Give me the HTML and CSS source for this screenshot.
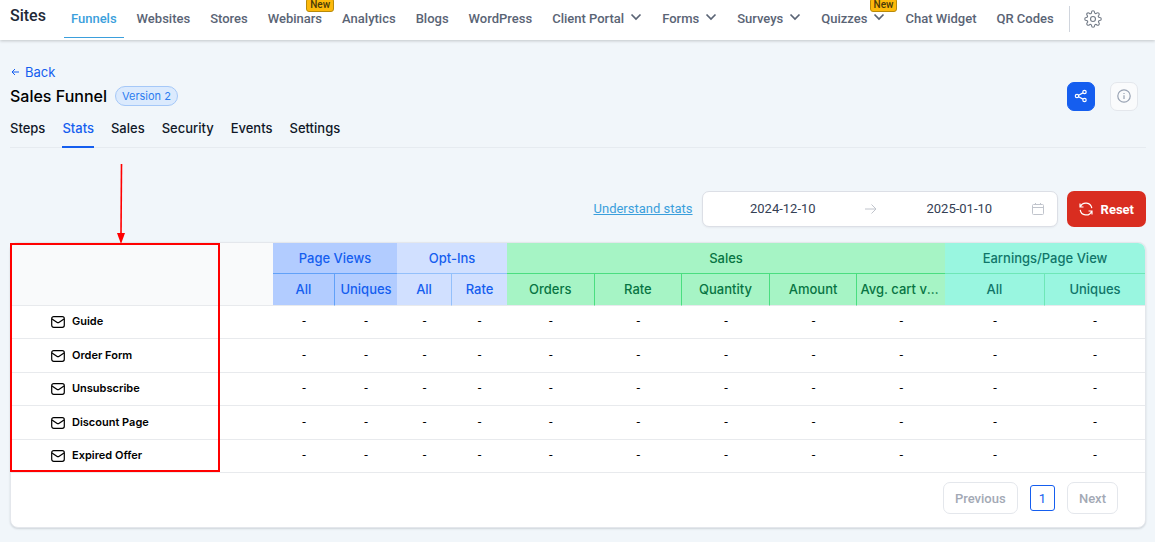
FILE: index.html
```html
<!DOCTYPE html>
<html lang="en">
<head>
    <meta charset="UTF-8">
    <meta name="viewport" content="width=device-width, initial-scale=1.0">
    <title>Sales Funnel - Stats</title>
    <link rel="stylesheet" href="styles.css">
</head>
<body>

    <svg class="sprite" aria-hidden="true">
        <symbol id="chevron" viewBox="0 0 12 8"><path d="M1.5 1.5 6 6l4.500-4.500" fill="none" stroke="currentColor" stroke-width="1.700"/></symbol>
        <symbol id="mail" viewBox="0 0 14 12"><rect x=".7" y=".7" width="12.600" height="10.600" rx="2" fill="none" stroke="currentColor" stroke-width="1.200"/><path d="M1 3l4.800 3.300q1.200.8 2.400 0L13 3" fill="none" stroke="currentColor" stroke-width="1.200"/></symbol>
    </svg>

    <header class="topbar">
        <div class="brand">Sites</div>
        <nav class="topnav">
            <a href="#" class="active">Funnels</a>
            <a href="#">Websites</a>
            <a href="#">Stores</a>
            <a href="#">Webinars<span class="new">New</span></a>
            <a href="#">Analytics</a>
            <a href="#">Blogs</a>
            <a href="#">WordPress</a>
            <a href="#">Client Portal<svg class="chevron"><use href="#chevron"/></svg></a>
            <a href="#">Forms<svg class="chevron"><use href="#chevron"/></svg></a>
            <a href="#">Surveys<svg class="chevron"><use href="#chevron"/></svg></a>
            <a href="#">Quizzes<svg class="chevron"><use href="#chevron"/></svg><span class="new">New</span></a>
            <a href="#">Chat Widget</a>
            <a href="#">QR Codes</a>
        </nav>
        <button class="gear" aria-label="Settings">
            <svg width="18" height="18" viewBox="0 0 24 24" fill="none" stroke="currentColor" stroke-width="1.500" stroke-linejoin="round">
                <circle cx="12" cy="12" r="3.300"/>
                <path d="M19.400 15a1.650 1.650 0 0 0 .33 1.820l.06.06a2 2 0 1 1-2.830 2.830l-.06-.06a1.650 1.650 0 0 0-2.800 1.170V21a2 2 0 0 1-4 0v-.09A1.650 1.650 0 0 0 7.200 19.730l-.06.06a2 2 0 1 1-2.830-2.830l.06-.06A1.650 1.650 0 0 0 3.090 14H3a2 2 0 0 1 0-4h.09A1.650 1.650 0 0 0 4.270 7.200l-.06-.06a2 2 0 1 1 2.830-2.830l.06.06A1.650 1.650 0 0 0 10 3.090V3a2 2 0 0 1 4 0v.09a1.650 1.650 0 0 0 2.800 1.180l.06-.06a2 2 0 1 1 2.830 2.830l-.06.06A1.650 1.650 0 0 0 20.910 10H21a2 2 0 0 1 0 4h-.09a1.650 1.650 0 0 0-1.510 1z"/>
            </svg>
        </button>
    </header>

    <main class="page">
        <a href="#" class="back">
            <svg width="9" height="8" viewBox="0 0 9 8" fill="none" stroke="currentColor"><path d="M8 4H1M4 1 1 4l3 3"/></svg>
            Back
        </a>
        <div class="title-row">
            <h1>Sales Funnel</h1>
            <span class="version">Version 2</span>
            <div class="title-actions">
                <button class="icon-btn share" aria-label="Share">
                    <svg width="14" height="14" viewBox="0 0 14 14" fill="none" stroke="currentColor" stroke-width="1.200"><circle cx="3" cy="7" r="1.700"/><circle cx="10.500" cy="3" r="1.700"/><circle cx="10.500" cy="11" r="1.700"/><path d="M4.700 6.200 8.900 3.900M4.700 7.800l4.200 2.300"/></svg>
                </button>
                <button class="icon-btn" aria-label="Info">
                    <svg width="14" height="14" viewBox="0 0 14 14" fill="none" stroke="currentColor" stroke-width="1.200"><circle cx="7" cy="7" r="6.200"/><path d="M7 6.200V10M7 4v1"/></svg>
                </button>
            </div>
        </div>

        <nav class="tabs">
            <a href="#">Steps</a>
            <a href="#" class="active">Stats</a>
            <a href="#">Sales</a>
            <a href="#">Security</a>
            <a href="#">Events</a>
            <a href="#">Settings</a>
        </nav>

        <div class="filters">
            <a href="#" class="help">Understand stats</a>
            <div class="range">
                <input type="text" value="2024-12-10" aria-label="Start date">
                <svg class="to" width="12" height="10" viewBox="0 0 12 10" fill="none" stroke="currentColor"><path d="M0 5h11M6.500.5 11 5 6.500 9.500"/></svg>
                <input type="text" value="2025-01-10" aria-label="End date">
                <svg width="12" height="12" viewBox="0 0 12 12" fill="none" stroke="currentColor"><rect x=".5" y="1.500" width="11" height="10" rx="1"/><path d="M.5 4.500h11M3.500 0v2M8.500 0v2"/></svg>
            </div>
            <button class="reset">
                <svg width="14" height="14" viewBox="0 0 14 14" fill="none" stroke="currentColor" stroke-width="1.200"><path d="M1 1.500V5h3.500M1.300 4.800A6 6 0 0 1 12.800 6.200M13 12.500V9H9.500M12.700 9.200A6 6 0 0 1 1.200 7.800"/></svg>
                Reset
            </button>
        </div>

        <section class="card">
            <table class="stats">
                <colgroup>
                    <col class="c-name">
                    <col class="c-views"><col class="c-views">
                    <col class="c-opt"><col class="c-opt">
                    <col><col><col><col><col>
                    <col class="c-earn"><col class="c-earn">
                </colgroup>
                <thead>
                    <tr>
                        <td rowspan="2" class="blank"></td>
                        <th colspan="2" class="views">Page Views</th>
                        <th colspan="2" class="opt">Opt-Ins</th>
                        <th colspan="5" class="sales">Sales</th>
                        <th colspan="2" class="earn">Earnings/Page View</th>
                    </tr>
                    <tr class="sub">
                        <th class="views split">All</th>
                        <th class="views">Uniques</th>
                        <th class="opt split">All</th>
                        <th class="opt">Rate</th>
                        <th class="sales split">Orders</th>
                        <th class="sales split">Rate</th>
                        <th class="sales split">Quantity</th>
                        <th class="sales split">Amount</th>
                        <th class="sales">Avg. cart value</th>
                        <th class="earn split">All</th>
                        <th class="earn">Uniques</th>
                    </tr>
                </thead>
                <tbody>
                    <tr><th scope="row"><svg class="mail"><use href="#mail"/></svg>Guide</th><td>-</td><td>-</td><td>-</td><td>-</td><td>-</td><td>-</td><td>-</td><td>-</td><td>-</td><td>-</td><td>-</td></tr>
                    <tr><th scope="row"><svg class="mail"><use href="#mail"/></svg>Order Form</th><td>-</td><td>-</td><td>-</td><td>-</td><td>-</td><td>-</td><td>-</td><td>-</td><td>-</td><td>-</td><td>-</td></tr>
                    <tr><th scope="row"><svg class="mail"><use href="#mail"/></svg>Unsubscribe</th><td>-</td><td>-</td><td>-</td><td>-</td><td>-</td><td>-</td><td>-</td><td>-</td><td>-</td><td>-</td><td>-</td></tr>
                    <tr><th scope="row"><svg class="mail"><use href="#mail"/></svg>Discount Page</th><td>-</td><td>-</td><td>-</td><td>-</td><td>-</td><td>-</td><td>-</td><td>-</td><td>-</td><td>-</td><td>-</td></tr>
                    <tr><th scope="row"><svg class="mail"><use href="#mail"/></svg>Expired Offer</th><td>-</td><td>-</td><td>-</td><td>-</td><td>-</td><td>-</td><td>-</td><td>-</td><td>-</td><td>-</td><td>-</td></tr>
                </tbody>
            </table>
            <div class="pager">
                <button disabled>Previous</button>
                <button class="current">1</button>
                <button disabled>Next</button>
            </div>

            <!-- callout around the step names -->
            <div class="callout"></div>
            <svg class="callout-arrow" width="8" height="80" viewBox="0 0 8 80"><path d="M4.500 0 4 70" stroke="#f00" stroke-width="1.600"/><path d="M0 69h8L4 80z" fill="#f00"/></svg>
        </section>
    </main>

</body>
</html>
```
FILE: styles.css
```css
* {
    box-sizing: border-box;
}

body {
    margin: 0;
    background: #f1f6fa;
    color: #101828;
    font-family: Inter, "Liberation Sans", sans-serif;
    font-size: 13px;
    line-height: 16px;
}

a {
    color: inherit;
    text-decoration: none;
}

button,
input {
    font-family: Roboto, "Liberation Sans", sans-serif;
    font-size: 13px;
}

.sprite {
    position: absolute;
    width: 0;
    height: 0;
}

/* top bar */
.topbar {
    display: flex;
    align-items: flex-start;
    height: 40px;
    padding-left: 10px;
    background: #fff;
    box-shadow: 0 1px 3px rgba(0, 0, 0, 0.2);
    font-family: Roboto, "Liberation Sans", sans-serif;
    font-weight: 500;
}

.brand {
    padding-top: 8px;
    margin-right: 18px;
    font-size: 16px;
    color: #1f2937;
}

.topnav {
    display: flex;
    gap: 6px;
    padding-right: 8px;
    white-space: nowrap;
}

.topnav a {
    position: relative;
    display: flex;
    height: 38px;
    padding: 11px 7px 0 7px;
    color: #5a6475;
}

.topnav .active {
    color: #3b9fdc;
    border-bottom: 1px solid #3b9fdc;
}

.chevron {
    width: 12px;
    height: 8px;
    margin: 2px 0 0 6px;
}

.new {
    position: absolute;
    top: -2px;
    right: -5px;
    padding: 0 3px;
    border: 1px solid #b88a0a;
    border-radius: 3px;
    background: #fdb90b;
    color: #4a3a08;
    font-size: 10px;
    line-height: 12px;
}

.gear {
    display: flex;
    align-items: center;
    height: 26px;
    margin-top: 6px;
    padding: 0 0 0 14px;
    border: 0;
    border-left: 1px solid #d0d5dd;
    background: none;
    color: #737b87;
}

/* page head */
.page {
    padding: 23px 9px 14px 10px;
}

.back {
    display: inline-flex;
    align-items: center;
    gap: 5px;
    padding-left: 1px;
    color: #155eef;
}

.title-row {
    display: flex;
    align-items: center;
    height: 32px;
}

h1 {
    margin: 0;
    font-size: 16px;
    font-weight: 500;
    color: #000;
}

.version {
    margin-left: 8px;
    padding: 0 6px;
    border: 1px solid #a5c8f8;
    border-radius: 10px;
    background: #dbeafd;
    color: #2b7cf0;
    font-size: 11px;
    line-height: 18px;
}

.title-actions {
    display: flex;
    gap: 15px;
    margin-left: auto;
    padding-right: 8px;
}

.icon-btn {
    display: flex;
    align-items: center;
    justify-content: center;
    width: 28px;
    height: 29px;
    padding: 0;
    border: 1px solid #e4e7ec;
    border-radius: 7px;
    background: #fafbfc;
    color: #98a2b3;
}

.share {
    border-color: #155eef;
    background: #155eef;
    color: #fff;
}

.tabs {
    display: flex;
    gap: 17px;
    height: 36px;
    border-bottom: 1px solid #e6ebf0;
    font-weight: 500;
}

.tabs a {
    height: 36px;
    padding-top: 8px;
}

.tabs .active {
    color: #155eef;
    border-bottom: 2px solid #155eef;
}

/* filters */
.filters {
    display: flex;
    align-items: center;
    justify-content: flex-end;
    margin: 43px 0 15px;
    font-family: Roboto, "Liberation Sans", sans-serif;
}

.help {
    color: #3b9fdc;
    text-decoration: underline;
}

.range {
    display: flex;
    align-items: center;
    width: 356px;
    height: 36px;
    margin: 0 9px;
    padding: 0 13px 0 8px;
    border: 1px solid #dcdfe6;
    border-radius: 7px;
    background: #fff;
    box-shadow: 0 1px 2px rgba(16, 24, 40, 0.05);
    color: #c0c4cc;
}

.range input {
    flex: 1;
    min-width: 0;
    padding: 0 0 1px;
    border: 0;
    background: none;
    color: #344054;
    text-align: center;
}

.to {
    margin: 0 10px;
}

.reset {
    display: flex;
    align-items: center;
    gap: 8px;
    height: 36px;
    padding: 0 12px;
    border: 0;
    border-radius: 7px;
    background: #d92d20;
    color: #fff;
    font-weight: 700;
}

/* stats table */
.card {
    position: relative;
    border: 1px solid #e4e7ec;
    border-radius: 8px;
    background: #fff;
    box-shadow: 0 1px 2px rgba(16, 24, 40, 0.15);
}

.stats {
    width: 100%;
    table-layout: fixed;
    border-collapse: separate;
    border-spacing: 0;
}

.c-name { width: 262px; }
.c-views { width: 62px; }
.c-opt { width: 55px; }
.c-earn { width: 100px; }

.stats th,
.stats td {
    padding: 0;
    text-align: center;
    border-bottom: 1px solid #e8eaed;
}

.stats thead th {
    height: 31px;
    padding: 0 3px;
    font-weight: 500;
    white-space: nowrap;
    overflow: hidden;
    text-overflow: ellipsis;
}

.stats .blank {
    background: #f9fafb;
    border-top-left-radius: 7px;
}

.stats .views { background: #b2ccff; color: #155eef; border-color: #61a1f8; }
.stats .opt { background: #d1e0ff; color: #155eef; border-color: #93c0fb; }
.stats .sales { background: #a6f4c5; color: #087443; border-color: #4ade80; }
.stats .earn { background: #99f6e0; color: #107569; border-color: #6ee7b7; }

.stats .split {
    border-right-width: 1px;
    border-right-style: solid;
}

.stats thead .sub th {
    height: 32px;
    padding-bottom: 1px;
    border-bottom-color: #e8eaed;
}

.stats tr:first-child .earn {
    border-top-right-radius: 7px;
}

.stats tbody th,
.stats tbody td {
    height: 33px;
    padding-bottom: 2px;
}

.stats tbody tr:nth-child(even) td {
    height: 34px;
}

.stats tbody td {
    font-family: Roboto, "Liberation Sans", sans-serif;
    color: #000;
}

.stats tbody th {
    padding-left: 40px;
    text-align: left;
    font-size: 11px;
    font-weight: 600;
    color: #000;
}

.mail {
    width: 14px;
    height: 12px;
    margin-right: 7px;
    vertical-align: -3px;
}

.pager {
    display: flex;
    align-items: center;
    justify-content: flex-end;
    gap: 12px;
    padding: 9px 27px 13px;
}

.pager button {
    height: 32px;
    padding: 0 11px;
    border: 1px solid #e4e7ec;
    border-radius: 7px;
    background: #fff;
    color: #a3a9b5;
    font-weight: 500;
}

.pager .current {
    height: 26px;
    padding: 0 8px;
    border-color: #155eef;
    border-radius: 3px;
    color: #155eef;
    font-weight: 400;
}

.callout {
    position: absolute;
    top: 0;
    left: -1px;
    width: 210px;
    height: 229px;
    border: 2px solid #f00;
}

.callout-arrow {
    position: absolute;
    top: -79px;
    left: 106px;
}
```
